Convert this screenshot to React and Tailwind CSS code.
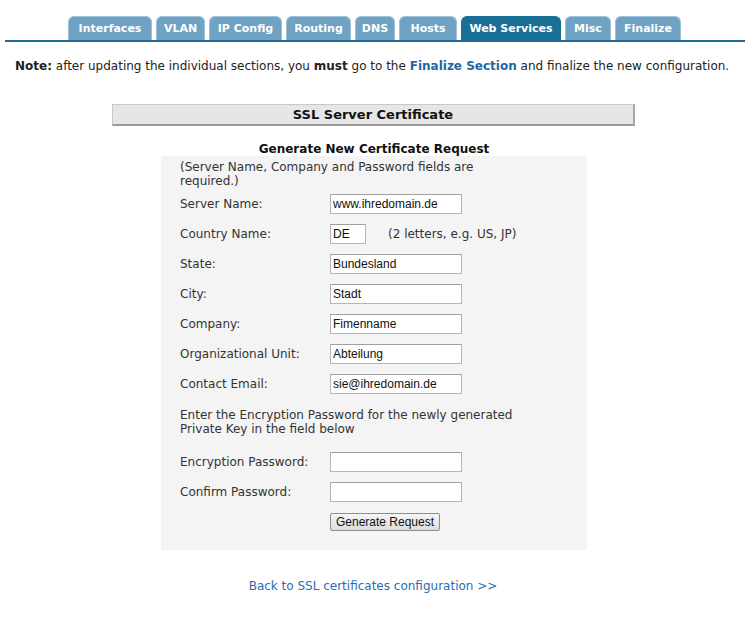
import { useState } from "react";

const tabs = [
  { name: "Interfaces", w: "w-[84px]" },
  { name: "VLAN", w: "w-[49px]" },
  { name: "IP Config", w: "w-[73px]" },
  { name: "Routing", w: "w-[65px]" },
  { name: "DNS", w: "w-[40px]" },
  { name: "Hosts", w: "w-[58px]" },
  { name: "Web Services", w: "w-[100px]", active: true },
  { name: "Misc", w: "w-[46px]" },
  { name: "Finalize", w: "w-[66px]" },
];

const fields = [
  { label: "Server Name:", value: "www.ihredomain.de" },
  { label: "Country Name:", value: "DE", short: true },
  { label: "State:", value: "Bundesland" },
  { label: "City:", value: "Stadt" },
  { label: "Company:", value: "Fimenname" },
  { label: "Organizational Unit:", value: "Abteilung" },
  { label: "Contact Email:", value: "sie@ihredomain.de" },
];

function Field({ value, short, type = "text" }) {
  const [val, setVal] = useState(value);
  return (
    <input
      type={type}
      value={val}
      onChange={(e) => setVal(e.target.value)}
      className={`${short ? "w-[36px]" : "w-[132px]"} h-[20px] bg-white border border-[#b5b5b5] border-t-[#a0a0a0] px-[2px] text-[12px] text-[#111] outline-none font-['Liberation_Sans',sans-serif]`}
    />
  );
}

export default function App() {
  return (
    <main className="min-h-screen bg-white text-[12px] text-[#222] font-['DejaVu_Sans',sans-serif]">

      <nav className="ml-[5px] w-[740px] pt-[16px] border-b-2 border-[#206c90]">
        <div className="flex justify-start gap-[4px] pl-[63px]">
          {tabs.map((t) => (
            <div
              key={t.name}
              className={`${t.w} h-[24px] pt-[1px] rounded-t-[6px] flex items-center justify-center text-white font-bold text-[11px] border border-b-0 ${
                t.active
                  ? "bg-[#1a6f96] border-[#1a6f96]"
                  : "bg-[#6fa2c3] border-[#9cc1d8]"
              }`}
            >
              {t.name}
            </div>
          ))}
        </div>
      </nav>

      <p className="mt-[17px] pl-[15px] leading-[14px] text-[12px]">
        <b>Note:</b> after updating the individual sections, you <b>must</b> go to the{" "}
        <a href="#" className="font-bold text-[#1e67a3]">Finalize Section</a> and finalize the new configuration.
      </p>

      <div className="mt-[31px] ml-[112px] w-[523px] h-[22px] bg-[#e6e6e6] border border-[#c8c8c8] border-b-2 border-r-2 border-b-[#9a9a9a] border-r-[#a8a8a8] flex items-center justify-center font-bold text-[13px] text-[#111]">
        SSL Server Certificate
      </div>

      <h3 className="mt-[16px] text-center font-bold text-[12px] leading-[14px] text-[#111] pr-[8px]">
        Generate New Certificate Request
      </h3>

      <section className="ml-[161px] w-[426px] bg-[#f4f4f4] pt-[4px] pb-[19px] pl-[19px]">
        <p className="leading-[14px] text-[#333]">
          (Server Name, Company and Password fields are<br />required.)
        </p>

        <div className="mt-[1px]">
          {fields.map((f) => (
            <div key={f.label} className="h-[30px] flex items-center">
              <span className="w-[150px] text-[#333]">{f.label}</span>
              <Field value={f.value} short={f.short} />
              {f.short && <span className="ml-[22px] text-[#333]">(2 letters, e.g. US, JP)</span>}
            </div>
          ))}
        </div>

        <p className="mt-[9px] leading-[14px] text-[#333]">
          Enter the Encryption Password for the newly generated<br />Private Key in the field below
        </p>

        <div className="mt-[11px]">
          <div className="h-[30px] flex items-center">
            <span className="w-[150px] text-[#333]">Encryption Password:</span>
            <Field value="" type="password" />
          </div>
          <div className="h-[30px] flex items-center">
            <span className="w-[150px] text-[#333]">Confirm Password:</span>
            <Field value="" type="password" />
          </div>
        </div>

        <div className="mt-[6px] pl-[150px]">
          <button className="w-[110px] h-[18px] rounded-[2px] border border-[#8e8e8e] bg-gradient-to-b from-[#f6f6f6] to-[#dcdcdc] text-[12px] leading-[14px] text-[#111] font-['Liberation_Sans',sans-serif]">
            Generate Request
          </button>
        </div>
      </section>

      <div className="mt-[29px] text-center pr-[10px] leading-[14px]">
        <a href="#" className="text-[#2b6cb5]">Back to SSL certificates configuration &gt;&gt;</a>
      </div>

    </main>
  );
}
